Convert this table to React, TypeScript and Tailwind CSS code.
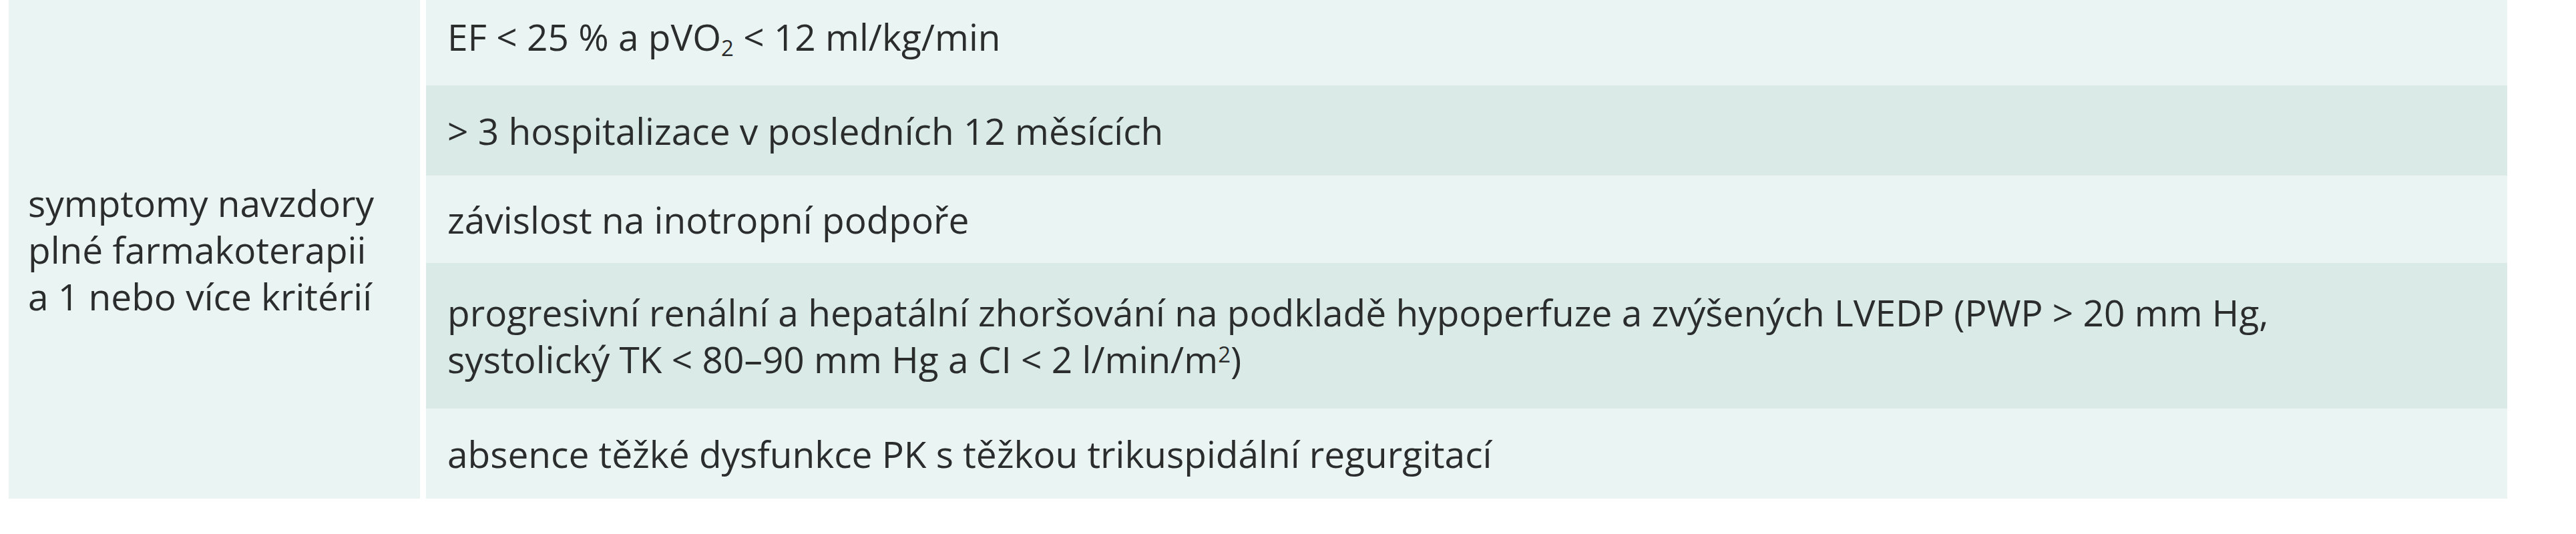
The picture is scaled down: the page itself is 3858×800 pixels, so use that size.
import React from "react";

export default function App() {
  const rows = [
    {
      h: "h-[128px] pb-[18px]",
      bg: "bg-[#eaf4f2]",
      content: (
        <>
          EF &lt; 25 % a pVO<sub className="text-[0.6em]">2</sub> &lt; 12 ml/kg/min
        </>
      ),
    },
    {
      h: "h-[135px]",
      bg: "bg-[#d9eae7]",
      content: <>&gt; 3 hospitalizace v posledních 12 měsících</>,
    },
    {
      h: "h-[131px]",
      bg: "bg-[#eaf4f2]",
      content: <>závislost na inotropní podpoře</>,
    },
    {
      h: "h-[218px]",
      bg: "bg-[#d9eae7]",
      content: (
        <>
          progresivní renální a hepatální zhoršování na podkladě hypoperfuze a zvýšených LVEDP (PWP &gt; 20 mm Hg,
          <br />
          systolický TK &lt; 80–90 mm Hg a CI &lt; 2 l/min/m<sup className="text-[0.6em]">2</sup>)
        </>
      ),
    },
    {
      h: "h-[135px]",
      bg: "bg-[#eaf4f2]",
      content: <>absence těžké dysfunkce PK s těžkou trikuspidální regurgitací</>,
    },
  ];

  return (
    <div className="w-full h-[800px] bg-white font-['Open_Sans',sans-serif] text-[55px] leading-[70px] text-[#2b2d2d]">
      {/* Table */}
      <div className="flex pl-[13px] gap-[9px]">
        <div className="w-[616px] h-[747px] bg-[#eaf4f2] flex items-center pl-[29px] pr-4">
          <p>
            symptomy navzdory
            <br />
            plné farmakoterapii
            <br />a 1 nebo více kritérií
          </p>
        </div>
        <div className="w-[3117px] flex flex-col">
          {rows.map((row, i) => (
            <div key={i} className={`${row.h} ${row.bg} flex items-center pl-[32px]`}>
              <p>{row.content}</p>
            </div>
          ))}
        </div>
      </div>
    </div>
  );
}
